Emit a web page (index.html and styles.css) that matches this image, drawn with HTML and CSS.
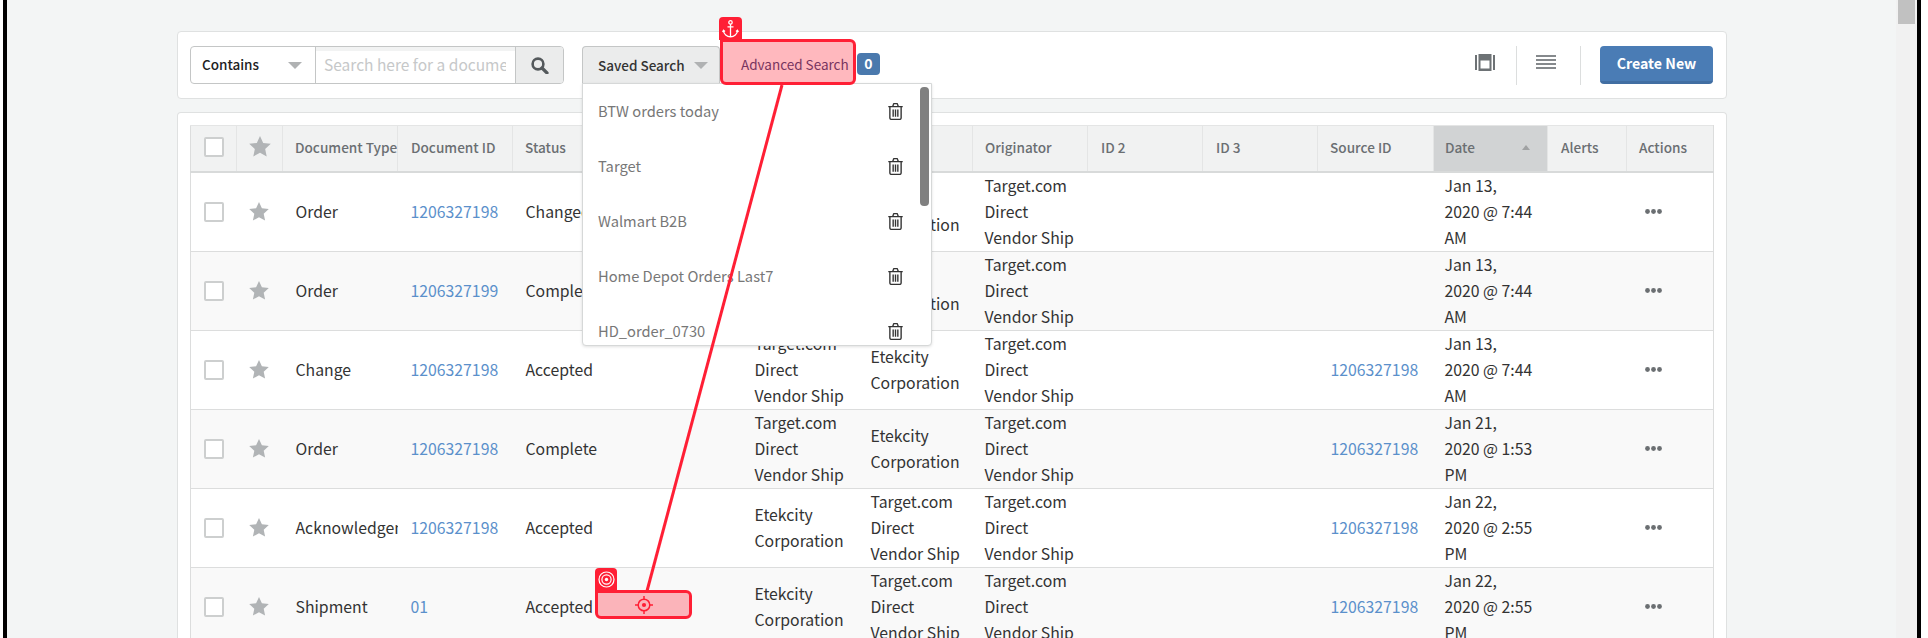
FILE: index.html
```html
<!DOCTYPE html>
<html lang="en">
<head>
<meta charset="utf-8">
<title>Documents</title>
<link rel="stylesheet" href="styles.css">
</head>
<body>
<svg class="defs" width="0" height="0" aria-hidden="true">
  <symbol id="star" viewBox="0 0 20 19"><path d="M10 0l2.9 6.3 6.9.8-5.1 4.7 1.4 6.8L10 15.2l-6.1 3.4 1.4-6.8L.2 7.1l6.9-.8z"/></symbol>
  <symbol id="trash" viewBox="0 0 14 16"><path fill="none" stroke="currentColor" stroke-width="1.3" d="M.2 3.4h13.600M1.700 3.400v10.700c0 .8.500 1.300 1.300 1.300h8c.8 0 1.300-.5 1.300-1.300V3.400M4.400 3.200l.7-2c.1-.4.4-.6.8-.6h2.200c.4 0 .7.200.8.600l.7 2M4.800 6v7M7 6v7M9.200 6v7"/></symbol>
  <symbol id="dots" viewBox="0 0 17 5"><circle cx="2.5" cy="2.5" r="2.4"/><circle cx="8.5" cy="2.5" r="2.4"/><circle cx="14.5" cy="2.5" r="2.4"/></symbol>
</svg>
<div class="frame">
  <main class="main">
    <section class="card toolbar">
      <form class="search">
        <div class="search-mode"><span>Contains</span><i class="caret"></i></div>
        <input class="search-input" type="text" placeholder="Search here for a document">
        <button class="search-btn" type="button" aria-label="Search">
          <svg width="18" height="17" viewBox="0 0 18 17"><circle cx="7" cy="7" r="5.4" fill="none" stroke="#54595c" stroke-width="2.6"/><path d="M11 11l5 5" stroke="#54595c" stroke-width="3.2" stroke-linecap="round"/></svg>
        </button>
      </form>
      <div class="saved">
        <button class="saved-btn" type="button"><span>Saved Search</span><i class="caret"></i></button>
        <div class="menu">
          <div class="menu-item"><span>BTW orders today</span><svg class="trash"><use href="#trash"/></svg></div>
          <div class="menu-item"><span>Target</span><svg class="trash"><use href="#trash"/></svg></div>
          <div class="menu-item"><span>Walmart B2B</span><svg class="trash"><use href="#trash"/></svg></div>
          <div class="menu-item"><span>Home Depot Orders Last7</span><svg class="trash"><use href="#trash"/></svg></div>
          <div class="menu-item"><span>HD_order_0730</span><svg class="trash"><use href="#trash"/></svg></div>
          <div class="menu-thumb"></div>
        </div>
      </div>
      <a class="advanced">Advanced Search</a>
      <span class="badge">0</span>
      <div class="tools">
        <svg class="tool" width="20" height="17" viewBox="0 0 20 17"><path fill="#6d7275" d="M0 1h2v15H0zM18 1h2v15h-2zM3.500 0h13v17h-13z"/><path fill="#fff" d="M5.500 6.500h9v8h-9z"/></svg>
        <span class="divider"></span>
        <svg class="tool lines" width="20" height="14" viewBox="0 0 20 14"><path fill="#85898c" d="M0 0h20v2H0zM0 4h20v2H0zM0 8h20v2H0zM0 12h20v2H0z"/></svg>
        <span class="divider"></span>
        <button class="create" type="button">Create New</button>
      </div>
    </section>

    <section class="card grid-card">
      <table class="grid">
        <thead>
          <tr>
            <th><span class="check"></span></th>
            <th><svg class="star star-h"><use href="#star"/></svg></th>
            <th>Document Type</th>
            <th>Document ID</th>
            <th>Status</th>
            <th></th>
            <th>Sender</th>
            <th>Receiver</th>
            <th>Originator</th>
            <th>ID 2</th>
            <th>ID 3</th>
            <th>Source ID</th>
            <th class="sorted">Date<i class="sort"></i></th>
            <th>Alerts</th>
            <th>Actions</th>
          </tr>
        </thead>
        <tbody>
          <tr>
            <td><span class="check"></span></td><td><svg class="star"><use href="#star"/></svg></td>
            <td>Order</td><td><a>1206327198</a></td><td>Changed</td><td></td>
            <td>Target.com<br>Direct<br>Vendor Ship</td><td>Etekcity<br>Corporation</td>
            <td>Target.com<br>Direct<br>Vendor Ship</td><td></td><td></td><td></td>
            <td>Jan 13,<br>2020 @ 7:44<br>AM</td><td></td><td><svg class="dots"><use href="#dots"/></svg></td>
          </tr>
          <tr>
            <td><span class="check"></span></td><td><svg class="star"><use href="#star"/></svg></td>
            <td>Order</td><td><a>1206327199</a></td><td>Complete</td><td></td>
            <td>Target.com<br>Direct<br>Vendor Ship</td><td>Etekcity<br>Corporation</td>
            <td>Target.com<br>Direct<br>Vendor Ship</td><td></td><td></td><td></td>
            <td>Jan 13,<br>2020 @ 7:44<br>AM</td><td></td><td><svg class="dots"><use href="#dots"/></svg></td>
          </tr>
          <tr>
            <td><span class="check"></span></td><td><svg class="star"><use href="#star"/></svg></td>
            <td>Change</td><td><a>1206327198</a></td><td>Accepted</td><td></td>
            <td>Target.com<br>Direct<br>Vendor Ship</td><td>Etekcity<br>Corporation</td>
            <td>Target.com<br>Direct<br>Vendor Ship</td><td></td><td></td><td><a>1206327198</a></td>
            <td>Jan 13,<br>2020 @ 7:44<br>AM</td><td></td><td><svg class="dots"><use href="#dots"/></svg></td>
          </tr>
          <tr>
            <td><span class="check"></span></td><td><svg class="star"><use href="#star"/></svg></td>
            <td>Order</td><td><a>1206327198</a></td><td>Complete</td><td></td>
            <td>Target.com<br>Direct<br>Vendor Ship</td><td>Etekcity<br>Corporation</td>
            <td>Target.com<br>Direct<br>Vendor Ship</td><td></td><td></td><td><a>1206327198</a></td>
            <td>Jan 21,<br>2020 @ 1:53<br>PM</td><td></td><td><svg class="dots"><use href="#dots"/></svg></td>
          </tr>
          <tr>
            <td><span class="check"></span></td><td><svg class="star"><use href="#star"/></svg></td>
            <td>Acknowledgement</td><td><a>1206327198</a></td><td>Accepted</td><td></td>
            <td>Etekcity<br>Corporation</td><td>Target.com<br>Direct<br>Vendor Ship</td>
            <td>Target.com<br>Direct<br>Vendor Ship</td><td></td><td></td><td><a>1206327198</a></td>
            <td>Jan 22,<br>2020 @ 2:55<br>PM</td><td></td><td><svg class="dots"><use href="#dots"/></svg></td>
          </tr>
          <tr>
            <td><span class="check"></span></td><td><svg class="star"><use href="#star"/></svg></td>
            <td>Shipment</td><td><a>01</a></td><td>Accepted</td><td></td>
            <td>Etekcity<br>Corporation</td><td>Target.com<br>Direct<br>Vendor Ship</td>
            <td>Target.com<br>Direct<br>Vendor Ship</td><td></td><td></td><td><a>1206327198</a></td>
            <td>Jan 22,<br>2020 @ 2:55<br>PM</td><td></td><td><svg class="dots"><use href="#dots"/></svg></td>
          </tr>
        </tbody>
      </table>
    </section>
  </main>
  <div class="track"><div class="thumb"></div></div>
</div>

<svg class="connector" width="1928" height="638" aria-hidden="true"><path d="M782 85L647 591" stroke="#ff1f35" stroke-width="3" fill="none"/></svg>
<div class="pin anchor-tab">
  <svg width="17" height="18" viewBox="0 0 17 18" fill="none" stroke="#fff" stroke-width="1.3"><circle cx="8.500" cy="2.400" r="1.700"/><path d="M8.500 4.100v12.700M5.500 6.800h6M1.500 10.500c.2 3.800 3.400 6.200 7 6.300 3.600-.1 6.800-2.500 7-6.300M.6 12l.9-1.800L3 11.600M16.400 12l-.9-1.800L14 11.600"/></svg>
</div>
<div class="pin anchor-box"></div>
<div class="pin target-tab">
  <svg width="17" height="17" viewBox="0 0 17 17" fill="none" stroke="#fff" stroke-width="1.2"><circle cx="8.500" cy="8.500" r="7.500"/><circle cx="8.500" cy="8.500" r="4.600"/><circle cx="8.500" cy="8.500" r="1.700" fill="#fff" stroke="none"/></svg>
</div>
<div class="pin target-box">
  <svg width="18" height="18" viewBox="0 0 18 18" fill="none" stroke="#ff1f35" stroke-width="1.500"><circle cx="9" cy="9" r="5.800"/><circle cx="9" cy="9" r="2.100" fill="#ff1f35" stroke="none"/><path d="M9 0v3.500M9 14.500V18M0 9h3.500M14.500 9H18"/></svg>
</div>
</body>
</html>
```
FILE: styles.css
```css
* { box-sizing: border-box; }
html, body { margin: 0; padding: 0; height: 638px; overflow: hidden; background: #fff; }
body { font-family: "Noto Sans CJK SC", "Noto Sans", sans-serif; font-size: 15.800px; line-height: 26px; color: #333; position: relative; }
.defs { position: absolute; }

.frame { display: flex; margin-left: 3px; width: 1918px; height: 638px; border-left: 4px solid #000; border-right: 4px solid #000; background: #f3f5f5; overflow: hidden; }
.main { flex: 1; min-width: 0; padding: 31px 169px 0 170px; }
.track { width: 21px; background: #f1f1f1; padding: 0 2px; }
.thumb { height: 24px; background: #c1c1c1; }

.card { background: #fff; border: 1px solid #dfe1e1; border-radius: 4px; }
.toolbar { display: flex; align-items: center; height: 68px; padding: 0 13px 0 12px; margin-bottom: 13px; }

.search { display: flex; width: 374px; height: 38px; border: 1px solid #c4c6c6; border-radius: 4px; overflow: hidden; }
.search-mode { width: 125px; display: flex; align-items: center; justify-content: space-between; padding: 0 13px 3px 11px; font-size: 13.500px; font-weight: 500; color: #222; border-right: 1px solid #c4c6c6; }
.search-mode .caret { margin-top: 3px; }
.caret { display: inline-block; width: 0; height: 0; border-left: 7px solid transparent; border-right: 7px solid transparent; border-top: 7px solid #b0b2b3; }
.search-input { width: 199px; border: 0; outline: 0; padding: 0 9px 3px 8px; font: inherit; font-size: 15.500px; box-shadow: inset 0 4px 0 #f2f3f3; color: #333; }
.search-input::placeholder { color: #c6c8c9; opacity: 1; }
.search-btn { flex: 1; border: 0; border-left: 1px solid #c4c6c6; background: #ebecec; padding: 0; display: flex; align-items: center; justify-content: center; }

.saved { position: relative; margin-left: 18px; }
.saved-btn { display: flex; align-items: center; gap: 9px; width: 138px; height: 38px; padding: 0 0 2px 15px; font: inherit; font-size: 13.500px; font-weight: 500; color: #333; background: #ebecec; border: 1px solid #c4c6c6; border-bottom: 0; border-radius: 4px 4px 0 0; }
.saved-btn .caret { margin-top: 2px; }
.menu { position: absolute; top: 37px; left: 0; width: 350px; height: 263px; background: #fff; border: 1px solid #d6d8d8; border-radius: 0 0 4px 4px; box-shadow: 0 1px 3px rgba(0,0,0,.12); overflow: hidden; z-index: 5; }
.menu-item { display: flex; align-items: center; justify-content: space-between; height: 55px; padding: 0 28px 1px 15px; font-size: 14.700px; color: #777; }
.trash { width: 15px; height: 17px; color: #333; }
.menu-thumb { position: absolute; top: 3px; right: 2px; width: 9px; height: 119px; border-radius: 4px; background: #808080; }

.advanced { width: 137px; padding: 0 0 2px 21px; font-size: 13.500px; color: #3b4478; white-space: nowrap; }
.badge { width: 23px; height: 22px; line-height: 21px; text-align: center; background: #4a79ad; color: #fff; font-size: 14px; font-weight: 700; border-radius: 4px; margin-top: -3px; }

.tools { margin-left: auto; display: flex; align-items: center; }
.tool { display: block; margin-top: -6px; }
.divider { width: 1px; height: 39px; background: #dcdede; margin: 0 22px; }
.tools .divider:nth-of-type(1) { margin: 0 19px 0 21px; }
.tools .divider:last-of-type { margin: 0 19px 0 24px; }
.create { width: 113px; height: 38px; font: inherit; font-size: 14.200px; font-weight: 700; color: #fff; background: #4a7cb5; border: 0; border-bottom: 3px solid #416ea2; border-radius: 4px; padding: 0 0 2px; }

.grid-card { padding: 12px 13px 0 12px; border-bottom: 0; border-radius: 4px 4px 0 0; }
.grid { table-layout: fixed; width: 1523px; border-collapse: collapse; }
.grid th, .grid td { text-align: left; padding: 0 0 0 13px; white-space: nowrap; overflow: hidden; vertical-align: middle; }
.grid th { height: 46px; background: #f1f2f2; color: #6b6f72; font-size: 13.600px; font-weight: 500; border: 1px solid #e4e5e5; border-bottom: 2px solid #d8dada; padding-bottom: 3px; }
.grid th.sorted { background: #d1d3d4; position: relative; }
.grid td { height: 79px; border-bottom: 1px solid #dcdddd; }
.grid tbody tr:nth-child(even) td { background: #f9f9f9; }
.grid tr > :first-child { border-left: 1px solid #dcdddd; }
.grid tr > :last-child { border-right: 1px solid #dcdddd; }
.grid a { color: #5b90cb; }

.grid tr > :nth-child(1) { width: 46px; }
.grid tr > :nth-child(2) { width: 46px; padding-left: 12px; }
.grid tr > :nth-child(3) { width: 115px; }
.grid tr > :nth-child(4) { width: 115px; }
.grid tr > :nth-child(5) { width: 115px; }
.grid tr > :nth-child(6) { width: 114px; }
.grid tr > :nth-child(7) { width: 115px; }
.grid tr > :nth-child(8) { width: 116px; padding-left: 14px; }
.grid tr > :nth-child(9) { width: 115px; padding-left: 12px; }
.grid tr > :nth-child(10) { width: 115px; }
.grid tr > :nth-child(11) { width: 115px; }
.grid tr > :nth-child(12) { width: 116px; }
.grid tr > :nth-child(13) { width: 114px; padding-left: 11px; }
.grid tr > :nth-child(14) { width: 79px; }
.grid tr > :nth-child(15) { width: 87px; padding-left: 12px; }
.grid th:nth-child(3), .grid th:nth-child(5), .grid th:nth-child(12) { padding-left: 12px; }

.check { display: block; width: 20px; height: 20px; background: #fff; border: 2px solid #cdcfcf; border-radius: 2px; }
.star { display: block; width: 20px; height: 19px; fill: #b1b4b6; }
.star-h { width: 22px; height: 21px; }
.dots { display: block; width: 17px; height: 5px; fill: #6b6f72; margin-left: 6px; }
.sort { position: absolute; top: 19px; right: 17px; width: 0; height: 0; border-left: 4px solid transparent; border-right: 4px solid transparent; border-bottom: 5px solid #a0a2a3; }

.connector { position: absolute; top: 0; left: 0; z-index: 8; pointer-events: none; }
.pin { position: absolute; z-index: 9; }
.anchor-tab, .target-tab { display: flex; align-items: center; justify-content: center; background: #ff1f35; border-radius: 4px 4px 0 0; }
.anchor-box, .target-box { background: rgba(255, 20, 40, .3); border: 3px solid #ff1f35; border-radius: 6px; }
.anchor-tab { left: 719px; top: 17px; width: 23px; height: 23px; }
.anchor-box { left: 720px; top: 39px; width: 136px; height: 46px; border-top-left-radius: 0; }
.target-tab { left: 595px; top: 568px; width: 22px; height: 23px; }
.target-box { left: 595px; top: 590px; width: 97px; height: 29px; border-top-left-radius: 0; display: flex; align-items: center; justify-content: center; }
```
